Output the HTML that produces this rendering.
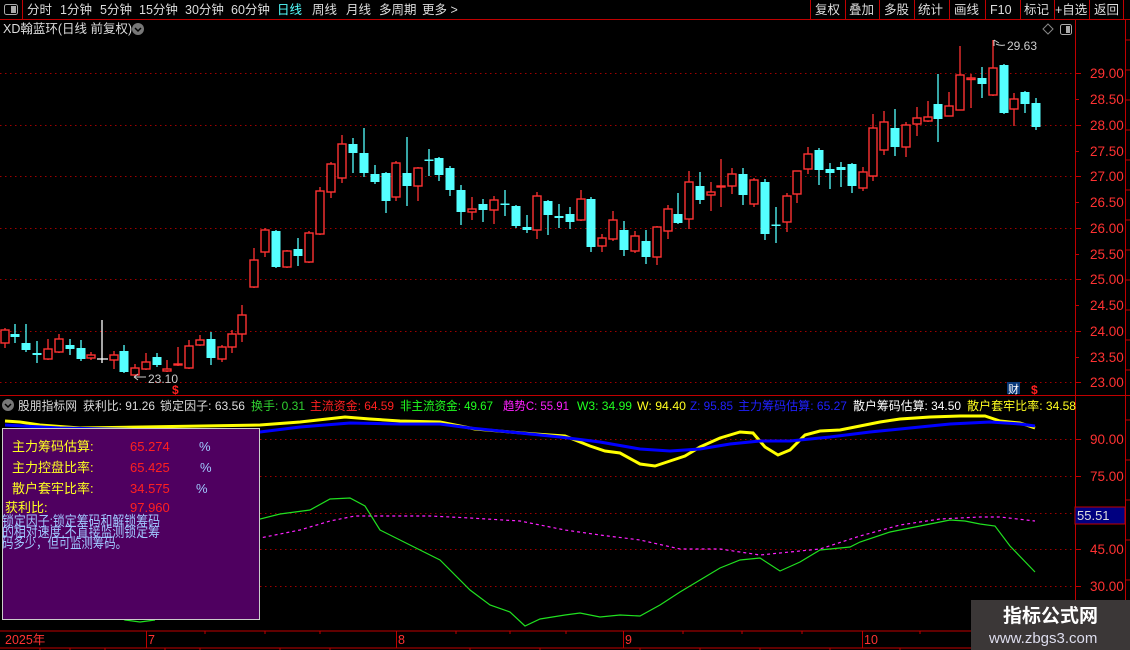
<!DOCTYPE html>
<html><head><meta charset="utf-8">
<style>
html,body{margin:0;padding:0;background:#000;width:1130px;height:650px;overflow:hidden}
svg{display:block;font-family:"Liberation Sans","Noto Sans CJK SC",sans-serif}
</style></head><body>
<svg width="1130" height="650" viewBox="0 0 1130 650" xmlns="http://www.w3.org/2000/svg">
<rect width="1130" height="650" fill="#000"/>
<g stroke="#c00000" stroke-width="1" fill="none">
<line x1="0" y1="19.5" x2="1130" y2="19.5"/>
<line x1="22.5" y1="0" x2="22.5" y2="19"/>
<line x1="810.5" y1="0" x2="810.5" y2="19"/><line x1="845.5" y1="0" x2="845.5" y2="19"/>
<line x1="879.5" y1="0" x2="879.5" y2="19"/><line x1="914.5" y1="0" x2="914.5" y2="19"/>
<line x1="949.5" y1="0" x2="949.5" y2="19"/><line x1="985.5" y1="0" x2="985.5" y2="19"/>
<line x1="1020.5" y1="0" x2="1020.5" y2="19"/><line x1="1054.5" y1="0" x2="1054.5" y2="19"/>
<line x1="1089.5" y1="0" x2="1089.5" y2="19"/><line x1="1123.5" y1="0" x2="1123.5" y2="19"/>
</g>
<rect x="4.5" y="4.5" width="13" height="10" rx="2" fill="none" stroke="#aaa"/><rect x="11" y="6" width="5" height="7" fill="#aaa"/>
<g font-size="12.5" fill="#ddd">
<text x="27" y="14">分时</text><text x="60" y="14">1分钟</text><text x="100" y="14">5分钟</text>
<text x="139" y="14">15分钟</text><text x="185" y="14">30分钟</text><text x="231" y="14">60分钟</text>
<text x="277" y="14" fill="#54ffff">日线</text><text x="312" y="14">周线</text><text x="346" y="14">月线</text>
<text x="379" y="14">多周期</text><text x="422" y="14">更多 &gt;</text>
<text x="815" y="14">复权</text><text x="849" y="14">叠加</text><text x="884" y="14">多股</text>
<text x="918" y="14">统计</text><text x="954" y="14">画线</text><text x="990" y="14">F10</text>
<text x="1024" y="14">标记</text><text x="1055" y="14">+自选</text><text x="1094" y="14">返回</text>
<text x="3" y="33">XD翰蓝环(日线 前复权)</text>
</g>
<circle cx="138" cy="29" r="6" fill="#777"/><path d="M135 28 L138 31 L141 28" stroke="#000" stroke-width="1.5" fill="none"/>
<path d="M1048 24 L1053 29 L1048 34 L1043 29Z" fill="none" stroke="#888"/>
<rect x="1060.5" y="24.5" width="11" height="10" rx="2" fill="none" stroke="#aaa"/><rect x="1066" y="26" width="4" height="7" fill="#aaa"/>
<g stroke="#c00000" fill="none">
<line x1="1075.5" y1="20" x2="1075.5" y2="631"/>
<line x1="1125.5" y1="20" x2="1125.5" y2="650"/>
<line x1="0" y1="395.5" x2="1130" y2="395.5"/>
<line x1="0" y1="631" x2="971" y2="631"/>
<line x1="0" y1="648" x2="971" y2="648"/>
</g>
<g stroke="#a00000" stroke-dasharray="1.5,3.5" stroke-width="1">
<line x1="0" y1="73.5" x2="1075" y2="73.5"/><line x1="0" y1="125.5" x2="1075" y2="125.5"/>
<line x1="0" y1="176.5" x2="1075" y2="176.5"/><line x1="0" y1="228.5" x2="1075" y2="228.5"/>
<line x1="0" y1="279.5" x2="1075" y2="279.5"/><line x1="0" y1="331.5" x2="1075" y2="331.5"/>
<line x1="0" y1="382.5" x2="1075" y2="382.5"/>
<line x1="260" y1="439.5" x2="1075" y2="439.5"/><line x1="260" y1="476.5" x2="1075" y2="476.5"/>
<line x1="260" y1="513.5" x2="1075" y2="513.5"/><line x1="260" y1="549.5" x2="1075" y2="549.5"/>
<line x1="260" y1="586.5" x2="1075" y2="586.5"/>
</g>
<g stroke="#c00000">
<path d="M1075 73.5h6M1075 99.5h4M1075 125.5h6M1075 151.5h4M1075 176.5h6M1075 202.5h4M1075 228.5h6M1075 254.5h4M1075 279.5h6M1075 305.5h4M1075 331.5h6M1075 357.5h4M1075 382.5h6M1075 439.5h6M1075 476.5h6M1075 549.5h6M1075 586.5h6"/>
<path d="M1125 40h5M1125 70h5M1125 100h5M1125 130h5M1125 160h5M1125 190h5M1125 220h5M1125 250h5M1125 280h5M1125 310h5M1125 340h5M1125 370h5M1125 420h5M1125 460h5M1125 500h5M1125 540h5M1125 580h5"/>
</g>
<g font-size="13.5" fill="#ff3232">
<text x="1090" y="78">29.00</text><text x="1090" y="104">28.50</text><text x="1090" y="130">28.00</text>
<text x="1090" y="156">27.50</text><text x="1090" y="181">27.00</text><text x="1090" y="207">26.50</text>
<text x="1090" y="233">26.00</text><text x="1090" y="259">25.50</text><text x="1090" y="284">25.00</text>
<text x="1090" y="310">24.50</text><text x="1090" y="336">24.00</text><text x="1090" y="362">23.50</text>
<text x="1090" y="387">23.00</text>
<text x="1090" y="444">90.00</text><text x="1090" y="481">75.00</text>
<text x="1090" y="554">45.00</text><text x="1090" y="591">30.00</text>
</g>
<rect x="1075" y="507" width="50" height="17" fill="#000080" stroke="#c00000"/>
<text x="1077" y="520" font-size="13" fill="#ddd">55.51</text>
<path stroke="#ff3232" stroke-width="1.3" fill="none" d="M5 328V348M48 339V360M59 334V353M91 352V360M114 351V369M135 364V376M146 353V370M167 360V372M178 347V366M189 340V369M200 335V346M222 345V362M232 330V353M242 305V342M254 248V288M265 228V257M287 250V268M309 231V263M320 187V235M331 162V198M342 135V183M396 161V201M418 167V201M472 197V220M494 196V224M537 192V239M581 190V221M602 234V252M613 211V241M635 231V253M657 226V265M668 205V239M689 171V229M711 182V211M721 159V207M732 168V194M754 178V207M787 193V232M797 171V203M808 147V174M863 167V191M873 114V181M884 111V155M906 122V157M917 107V136M928 101V122M949 92V116M960 46V110M971 74V108M993 40V96M1014 93V126"/>
<path stroke="#54ffff" stroke-width="1.3" fill="none" d="M15 324V343M26 324V352M37 341V363M70 339V355M81 340V361M124 345V373M157 353V367M211 332V365M276 230V268M298 238V266M353 138V173M364 128V177M375 165V184M386 172V213M407 137V206M429 149V176M439 157V181M450 166V196M461 185V225M483 199V222M505 190V216M516 205V228M527 215V233M548 200V235M559 204V228M570 207V229M591 197V252M624 221V256M646 230V264M678 193V224M700 172V204M743 168V205M765 179V240M776 207V243M819 148V185M830 163V189M841 162V187M852 163V193M895 109V156M938 74V142M982 67V98M1004 64V114M1025 91V113M1036 98V130"/>
<path stroke="#fff" stroke-width="1.3" d="M102 320V363M97 359H108"/>
<g fill="#000" stroke="#ff3232" stroke-width="1.4">
<rect x="1" y="330" width="8" height="13"/><rect x="44" y="349" width="8" height="10"/><rect x="55" y="339" width="8" height="13"/>
<rect x="87" y="355" width="8" height="3"/><rect x="110" y="355" width="8" height="5"/><rect x="131" y="368" width="8" height="7"/>
<rect x="142" y="362" width="8" height="7"/><rect x="163" y="369" width="8" height="2"/><rect x="174" y="364" width="8" height="1"/>
<rect x="185" y="346" width="8" height="22"/><rect x="196" y="340" width="8" height="5"/><rect x="218" y="347" width="8" height="12"/>
<rect x="228" y="334" width="8" height="13"/><rect x="238" y="315" width="8" height="19"/><rect x="250" y="260" width="8" height="27"/>
<rect x="261" y="230" width="8" height="22"/><rect x="283" y="251" width="8" height="16"/><rect x="305" y="233" width="8" height="29"/>
<rect x="316" y="191" width="8" height="43"/><rect x="327" y="164" width="8" height="28"/><rect x="338" y="144" width="8" height="34"/>
<rect x="392" y="163" width="8" height="34"/><rect x="414" y="168" width="8" height="18"/><rect x="468" y="209" width="8" height="3"/>
<rect x="490" y="200" width="8" height="10"/><rect x="533" y="196" width="8" height="34"/><rect x="577" y="199" width="8" height="21"/>
<rect x="598" y="238" width="8" height="8"/><rect x="609" y="220" width="8" height="19"/><rect x="631" y="236" width="8" height="15"/>
<rect x="653" y="227" width="8" height="30"/><rect x="664" y="209" width="8" height="22"/><rect x="685" y="182" width="8" height="37"/>
<rect x="707" y="192" width="8" height="3"/><rect x="717" y="186" width="8" height="1"/><rect x="728" y="174" width="8" height="12"/>
<rect x="750" y="180" width="8" height="24"/><rect x="783" y="196" width="8" height="26"/><rect x="793" y="171" width="8" height="23"/>
<rect x="804" y="154" width="8" height="15"/><rect x="859" y="172" width="8" height="16"/><rect x="869" y="128" width="8" height="48"/>
<rect x="880" y="122" width="8" height="28"/><rect x="902" y="125" width="8" height="22"/><rect x="913" y="118" width="8" height="6"/>
<rect x="924" y="117" width="8" height="4"/><rect x="945" y="106" width="8" height="10"/><rect x="956" y="75" width="8" height="35"/>
<rect x="967" y="78" width="8" height="1.5"/><rect x="989" y="68" width="8" height="27"/><rect x="1010" y="99" width="8" height="10"/>
</g>
<g fill="#54ffff">
<rect x="10.5" y="334" width="9" height="3"/><rect x="21.5" y="343" width="9" height="7"/><rect x="32.5" y="353" width="9" height="2"/>
<rect x="65.5" y="345" width="9" height="4"/><rect x="76.5" y="348" width="9" height="11"/><rect x="119.5" y="351" width="9" height="21"/>
<rect x="152.5" y="357" width="9" height="8"/><rect x="206.5" y="339" width="9" height="19"/><rect x="271.5" y="231" width="9" height="36"/>
<rect x="293.5" y="249" width="9" height="7"/><rect x="348.5" y="144" width="9" height="9"/><rect x="359.5" y="153" width="9" height="20"/>
<rect x="370.5" y="174" width="9" height="8"/><rect x="381.5" y="173" width="9" height="28"/><rect x="402.5" y="173" width="9" height="13"/>
<rect x="424.5" y="159.5" width="9" height="1.5"/><rect x="434.5" y="158" width="9" height="17"/><rect x="445.5" y="168" width="9" height="22"/>
<rect x="456.5" y="190" width="9" height="22"/><rect x="478.5" y="204" width="9" height="6"/><rect x="500.5" y="203.5" width="9" height="1.5"/>
<rect x="511.5" y="206" width="9" height="20"/><rect x="522.5" y="227" width="9" height="3"/><rect x="543.5" y="201" width="9" height="14"/>
<rect x="554.5" y="216" width="9" height="2"/><rect x="565.5" y="214" width="9" height="8"/><rect x="586.5" y="199" width="9" height="48"/>
<rect x="619.5" y="230" width="9" height="20"/><rect x="641.5" y="241" width="9" height="16"/><rect x="673.5" y="214" width="9" height="9"/>
<rect x="695.5" y="186" width="9" height="14"/><rect x="738.5" y="174" width="9" height="21"/><rect x="760.5" y="182" width="9" height="52"/>
<rect x="771.5" y="224.5" width="9" height="1.5"/><rect x="814.5" y="150" width="9" height="20"/><rect x="825.5" y="169" width="9" height="4"/>
<rect x="836.5" y="167" width="9" height="3"/><rect x="847.5" y="164" width="9" height="22"/><rect x="890.5" y="128" width="9" height="19"/>
<rect x="933.5" y="104" width="9" height="15"/><rect x="977.5" y="78" width="9" height="6"/><rect x="999.5" y="65" width="9" height="48"/>
<rect x="1020.5" y="92" width="9" height="12"/><rect x="1031.5" y="103" width="9" height="24"/>
</g>
<g fill="#ccc" font-size="12">
<path d="M994 40V46M994 40L999 43M996 44Q1000 46 1005 45" stroke="#ccc" fill="none"/>
<text x="1007" y="50">29.63</text>
<path d="M134 377L138 374M134 377L138 380M134 377H146" stroke="#ccc" fill="none"/>
<text x="148" y="383">23.10</text>
</g>
<rect x="1007" y="382" width="13" height="12" fill="#0a3a7a"/><text x="1008" y="393" font-size="11" fill="#fff">财</text>
<text x="1031" y="394" font-size="12" fill="#ff2020" font-weight="bold">$</text>
<text x="172" y="394" font-size="12" fill="#ff2020" font-weight="bold">$</text>
<circle cx="8" cy="405" r="6" fill="#777"/><path d="M5 404 L8 407 L11 404" stroke="#000" stroke-width="1.5" fill="none"/>
<g font-size="12" fill="#ddd" lengthAdjust="spacingAndGlyphs">
<text x="18" y="410" textLength="59" lengthAdjust="spacingAndGlyphs">股朋指标网</text>
<text x="83" y="410" textLength="72" lengthAdjust="spacingAndGlyphs">获利比: 91.26</text>
<text x="160" y="410" textLength="85" lengthAdjust="spacingAndGlyphs">锁定因子: 63.56</text>
<text x="251" y="410" fill="#30d030" textLength="54" lengthAdjust="spacingAndGlyphs">换手: 0.31</text>
<text x="310" y="410" fill="#ff2020" textLength="84" lengthAdjust="spacingAndGlyphs">主流资金: 64.59</text>
<text x="400" y="410" fill="#20ff20" textLength="93" lengthAdjust="spacingAndGlyphs">非主流资金: 49.67</text>
<text x="503" y="410" fill="#ff20ff" textLength="66" lengthAdjust="spacingAndGlyphs">趋势C: 55.91</text>
<text x="577" y="410" fill="#20ff20" textLength="55" lengthAdjust="spacingAndGlyphs">W3: 34.99</text>
<text x="637" y="410" fill="#ffff20" textLength="49" lengthAdjust="spacingAndGlyphs">W: 94.40</text>
<text x="690" y="410" fill="#2020ff" textLength="43" lengthAdjust="spacingAndGlyphs">Z: 95.85</text>
<text x="738" y="410" fill="#2020ff" textLength="109" lengthAdjust="spacingAndGlyphs">主力筹码估算: 65.27</text>
<text x="853" y="410" fill="#fff" textLength="108" lengthAdjust="spacingAndGlyphs">散户筹码估算: 34.50</text>
<text x="967" y="410" fill="#ffff20" textLength="109" lengthAdjust="spacingAndGlyphs">散户套牢比率: 34.58</text>
</g>
<polyline fill="none" stroke="#ffff00" stroke-width="3" points="5,421 20,422 40,425 80,428 260,425 300,422 345,417 370,419 400,421 440,422 475,429 510,432 535,434 565,436 590,446 605,451 620,453 640,464 655,466 670,461 685,456 700,447 720,438 740,432 753,433 765,447 778,455 790,450 805,435 820,431 840,430 860,426 880,422 900,419 930,417 960,416 985,416 1000,421 1020,423 1035,428"/>
<polyline fill="none" stroke="#0000ff" stroke-width="3" points="5,425 60,428 260,432 300,427 350,423 400,424 440,424 470,428 510,432 560,437 600,442 640,449 670,451 700,449 730,444 760,441 790,441 830,437 870,432 910,428 950,424 990,422 1020,424 1035,426"/>
<polyline fill="none" stroke="#ff20ff" stroke-width="1.2" stroke-dasharray="3,3" points="245,540 260,538 300,530 330,521 355,516 390,516 430,516 470,518 520,521 565,530 600,535 640,540 680,549 720,549 760,555 790,552 820,549 860,536 900,525 940,519 980,517 1000,517 1035,521"/>
<polyline fill="none" stroke="#20e020" stroke-width="1.2" points="240,532 260,519 280,514 310,510 330,499 350,498 365,506 380,530 410,545 440,560 470,590 490,605 510,612 525,626 540,619 565,615 580,613 600,617 620,615 640,616 660,605 680,592 700,580 720,568 740,560 760,558 780,571 800,562 820,550 850,547 860,542 890,532 910,528 930,524 950,520 965,521 980,524 995,526 1010,546 1035,572"/>
<polyline fill="none" stroke="#20e020" stroke-width="1.2" points="115,615 125,620 140,622 155,620"/>
<rect x="2.5" y="428.5" width="257" height="191" fill="#4f0060" stroke="#ccc" stroke-width="1"/>
<g font-size="13">
<text x="12" y="451" fill="#ffff20">主力筹码估算:</text><text x="130" y="451" fill="#ff2020">65.274</text><text x="199" y="451" fill="#a0c8ff">%</text>
<text x="12" y="472" fill="#ffff20">主力控盘比率:</text><text x="130" y="472" fill="#ff2020">65.425</text><text x="200" y="472" fill="#a0c8ff">%</text>
<text x="12" y="493" fill="#ffff20">散户套牢比率:</text><text x="130" y="493" fill="#ff2020">34.575</text><text x="196" y="493" fill="#a0c8ff">%</text>
<text x="5" y="512" fill="#ffff20">获利比:</text><text x="130" y="512" fill="#ff2020">97.960</text>
<text x="2" y="526" fill="#a0c8ff" font-size="14" textLength="158" lengthAdjust="spacingAndGlyphs">锁定因子:锁定筹码和解锁筹码</text>
<text x="2" y="537" fill="#a0c8ff" font-size="14" textLength="158" lengthAdjust="spacingAndGlyphs">的相对速度,不直接监测锁定筹</text>
<text x="2" y="548" fill="#a0c8ff" font-size="14" textLength="125" lengthAdjust="spacingAndGlyphs">码多少，但可监测筹码。</text>
</g>
<g stroke="#c00000">
<path d="M146.5 631V648M396.5 631V648M623.5 631V648M862.5 631V648"/>
<path d="M205 631v3M265 631v3M320 631v3M456 631v3M510 631v3M566 631v3M683 631v3M742 631v3M802 631v3M920 631v3"/>
<path d="M40 648v2M70 648v2M105 648v2M165 648v2M200 648v2M280 648v2M330 648v2M470 648v2M540 648v2M640 648v2M700 648v2M760 648v2M830 648v2M900 648v2"/>
</g>
<g font-size="12.5" fill="#ff3232">
<text x="5" y="644">2025年</text><text x="148" y="644">7</text><text x="398" y="644">8</text>
<text x="625" y="644">9</text><text x="864" y="644">10</text>
</g>
<rect x="971" y="600" width="159" height="50" fill="#3b3737"/>
<text x="1003" y="622" font-size="19" font-weight="bold" fill="#fff">指标公式网</text>
<text x="989" y="643" font-size="15" fill="#dde">www.zbgs3.com</text>
</svg>
</body></html>
